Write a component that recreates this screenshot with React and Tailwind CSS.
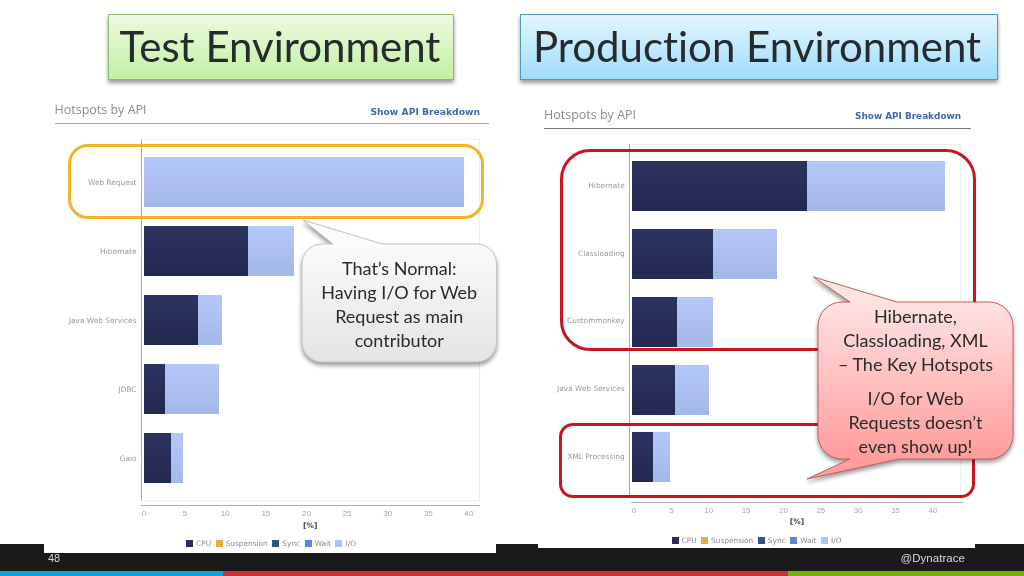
const LEGEND = [
  { name: 'CPU', color: 'bg-[#2a2f5c]' },
  { name: 'Suspension', color: 'bg-[#eeaa3c]' },
  { name: 'Sync', color: 'bg-[#344f8f]' },
  { name: 'Wait', color: 'bg-[#5d84dc]' },
  { name: 'I/O', color: 'bg-[#b0c2ef]' },
];

const TICKS = [0, 5, 10, 15, 20, 25, 30, 35, 40];

const TEST_ROWS = [
  { label: 'Web Request', cpu: 0, io: 319.5 },
  { label: 'Hibernate', cpu: 104, io: 46 },
  { label: 'Java Web Services', cpu: 54, io: 23.5 },
  { label: 'JDBC', cpu: 20.5, io: 54.5 },
  { label: 'Gaio', cpu: 26.5, io: 12.5 },
];

const PROD_ROWS = [
  { label: 'Hibernate', cpu: 174.7, io: 138 },
  { label: 'Classloading', cpu: 81, io: 64.5 },
  { label: 'Custommonkey', cpu: 45, io: 36.5 },
  { label: 'Java Web Services', cpu: 43, io: 34 },
  { label: 'XML Processing', cpu: 21.5, io: 17 },
];

function Legend() {
  return (
    <div className="flex justify-center items-center gap-[4.5px] text-[7.4px] leading-[10px] text-[#8a8a8a] font-['DejaVu_Sans',sans-serif]">
      {LEGEND.map((item) => (
        <span key={item.name} className="flex items-center gap-[3px]">
          <span className={`w-[7px] h-[7px] ${item.color}`} />
          {item.name}
        </span>
      ))}
    </div>
  );
}

function Chart({ rows, headerClass, ruleClass, linkClass, labelClass, plotClass, rowClass, axisClass, percentClass, legendClass, padClass }) {
  return (
    <div className="flex flex-col">
      {/* Panel header */}
      <div className={`flex justify-between items-end font-['DejaVu_Sans',sans-serif] ${headerClass} ${ruleClass}`}>
        <span className="text-[12.5px] leading-[16px] text-[#8c8c8c] font-['Open_Sans',sans-serif]">Hotspots by API</span>
        <span className={`leading-[13px] font-bold text-[#4368ad] ${linkClass}`}>Show API Breakdown</span>
      </div>

      {/* Labels + bars */}
      <div className={`flex ${padClass}`}>
        <div className={`flex flex-col shrink-0 ${labelClass}`}>
          {rows.map((r) => (
            <div key={r.label} className={`flex items-center justify-end text-[7.4px] text-[#989898] font-['DejaVu_Sans',sans-serif] ${rowClass}`}>
              {r.label}
            </div>
          ))}
        </div>
        <div className={`flex flex-col border-l-[1.5px] border-l-[#a8a8a8] border-t border-r border-b border-t-[#eeeeee] border-r-[#eeeeee] border-b-[#eeeeee] pl-[2px] ${plotClass}`}>
          {rows.map((r) => (
            <div key={r.label} className={`flex items-center ${rowClass}`}>
              {r.cpu > 0 && (
                <div className="h-[50px] bg-gradient-to-b from-[#2d3361] to-[#232850]" style={{ width: r.cpu }} />
              )}
              <div className="h-[50px] bg-gradient-to-b from-[#b4c7f9] to-[#a4b8e8]" style={{ width: r.io }} />
            </div>
          ))}
        </div>
      </div>

      {/* X axis */}
      <div className={`flex justify-between border-t-[1.5px] border-t-[#b0b0b0] text-[8px] leading-[10px] text-[#a8a8a8] font-['Liberation_Sans',sans-serif] ${axisClass}`}>
        {TICKS.map((t) => (
          <span key={t} className="w-0 flex justify-center">{t}</span>
        ))}
      </div>
      <div className={`text-center text-[7.5px] leading-[10px] font-bold text-[#444444] font-['DejaVu_Sans',sans-serif] ${percentClass}`}>[%]</div>
      <div className={legendClass}>
        <Legend />
      </div>
    </div>
  );
}

function Callout({ boxClass, path, id, from, to, stroke, height, children }) {
  return (
    <div className={`absolute z-30 flex flex-col items-center text-[#2b2b2b] text-[18px] leading-[24px] text-center [font-variant-ligatures:none] font-['Lato',sans-serif] ${boxClass}`}>
      <svg className="absolute inset-0 w-full h-full overflow-visible drop-shadow-[0_3px_2px_rgba(0,0,0,0.4)]">
        <defs>
          <linearGradient id={id} gradientUnits="userSpaceOnUse" x1="0" y1="0" x2="0" y2={height}>
            <stop offset="0" stopColor={from} />
            <stop offset="1" stopColor={to} />
          </linearGradient>
        </defs>
        <path d={path} fill={`url(#${id})`} stroke={stroke} strokeWidth="1" />
      </svg>
      <div className="relative">{children}</div>
    </div>
  );
}

export default function App() {
  return (
    <div className="relative w-[1024px] h-[576px] overflow-hidden bg-white flex flex-col blur-[0.35px]">
      <div className="relative z-10 h-[544px] shrink-0 flex">
        {/* Test environment */}
        <div className="w-[512px] flex flex-col">
          <div className="shrink-0 mt-[13.5px] ml-[108px] w-[346px] h-[66px] flex items-center justify-center pr-[2px] border border-[#8db96c] bg-gradient-to-b from-[#ecfae0] to-[#c3efa2] shadow-[0_3px_4px_rgba(0,0,0,0.4)] text-[42px] text-[#262b2e] [font-variant-ligatures:none] font-['Lato',sans-serif]">
            Test Environment
          </div>
          <div className="shrink-0 mt-[15.5px] ml-[44px] w-[452px] h-[458px] bg-white">
            <Chart
              rows={TEST_ROWS}
              headerClass="h-[28.5px] ml-[10.5px] pr-[9px] pb-[5px] mr-[7px]"
              ruleClass="border-b-[1.5px] border-b-[#a8a8a8]"
              linkClass="text-[9.2px]"
              padClass="pt-[15px]"
              labelClass="w-[92.5px] pt-[9.5px] mr-[4.5px]"
              plotClass="w-[338.5px] h-[362.5px] pt-[8px]"
              rowClass="h-[69px]"
              axisClass="mt-[3.5px] ml-[97px] w-[338.5px] pl-[3px] pr-[10.5px] pt-[3px]"
              percentClass="ml-[97px] w-[338.5px] mt-[2px]"
              legendClass="mt-[8px] ml-[2px]"
            />
          </div>
        </div>

        {/* Production environment */}
        <div className="w-[512px] flex flex-col">
          <div className="shrink-0 mt-[13.5px] ml-[7.5px] w-[478px] h-[66px] flex items-center justify-center pr-[3px] border border-[#4a9fb5] bg-gradient-to-b from-[#e4f5fe] to-[#9edcfb] shadow-[0_3px_4px_rgba(0,0,0,0.4)] text-[42px] text-[#262b2e] [font-variant-ligatures:none] font-['Lato',sans-serif]">
            Production Environment
          </div>
          <div className="shrink-0 mt-[15.5px] ml-[26px] w-[437px] h-[453px] bg-white">
            <Chart
              rows={PROD_ROWS}
              headerClass="h-[33.5px] pr-[9.5px] pb-[5px] ml-[6px] mr-[4.5px]"
              ruleClass="border-b border-b-[#777777]"
              linkClass="text-[8.9px]"
              padClass="pt-[15.5px]"
              labelClass="w-[86.7px] pt-[7.6px] mr-[4.3px]"
              plotClass="w-[332px] h-[354px] pt-[7.6px]"
              rowClass="h-[67.7px]"
              axisClass="mt-[4px] ml-[93px] w-[332px] pl-[3px] pr-[30px] pt-[2.5px]"
              percentClass="ml-[93px] w-[332px] mt-[1px]"
              legendClass="mt-[9px]"
            />
          </div>
        </div>
      </div>

      {/* Footer */}
      <div className="h-[32px] flex flex-col">
        <div className="h-[26.5px] bg-[#1a1a1a] flex items-start justify-between pl-[48px] pr-[59px] pt-[7px] text-[#d8d8d8] font-['Liberation_Sans',sans-serif]">
          <span className="mt-[1px] text-[11px] leading-[13px]">48</span>
          <span className="text-[11.5px] leading-[15px] tracking-[0.05px]">@Dynatrace</span>
        </div>
        <div className="h-[5.5px] flex">
          <div className="w-[222.5px] bg-[#06a5dc]" />
          <div className="w-[565.5px] bg-[#cd3136]" />
          <div className="flex-1 bg-[#7ab000]" />
        </div>
      </div>

      {/* Highlights drawn over the charts */}
      <div className="absolute z-20 left-[68px] top-[144px] w-[416px] h-[74.5px] rounded-[20px] border-[3px] border-[#f0b429]" />
      <div className="absolute z-20 left-[559.5px] top-[148.5px] w-[416px] h-[202px] rounded-[30px] border-[3px] border-[#c8161d]" />
      <div className="absolute z-20 left-[558.5px] top-[422.5px] w-[416px] h-[75px] rounded-[14px] border-[3px] border-[#c8161d]" />

      <Callout
        boxClass="left-[302px] top-[244px] w-[194.5px] h-[118px] pt-[12px]"
        id="normal-fill"
        from="#fbfbfb"
        to="#e4e4e4"
        stroke="#c4c4c4"
        height={118}
        path="M20,0 H31 L1,-24 L80,0 H174.5 A20,20 0 0 1 194.5,20 V98 A20,20 0 0 1 174.5,118 H20 A20,20 0 0 1 0,98 V20 A20,20 0 0 1 20,0 Z"
      >
        That’s Normal:<br />Having I/O for Web<br />Request as main<br />contributor
      </Callout>

      <Callout
        boxClass="left-[818px] top-[302px] w-[195px] h-[157px] pt-[2px]"
        id="hotspot-fill"
        from="#ffe2e2"
        to="#ff9c9c"
        stroke="#c0605c"
        height={157}
        path="M24,0 H32 L-4.5,-25 L79,0 H171 A24,24 0 0 1 195,24 V133 A24,24 0 0 1 171,157 H81 L-11,177 L32,157 H24 A24,24 0 0 1 0,133 V24 A24,24 0 0 1 24,0 Z"
      >
        Hibernate,<br />Classloading, XML<br />– The Key Hotspots
        <div className="mt-[10px]">I/O for Web<br />Requests doesn’t<br />even show up!</div>
      </Callout>
    </div>
  );
}
